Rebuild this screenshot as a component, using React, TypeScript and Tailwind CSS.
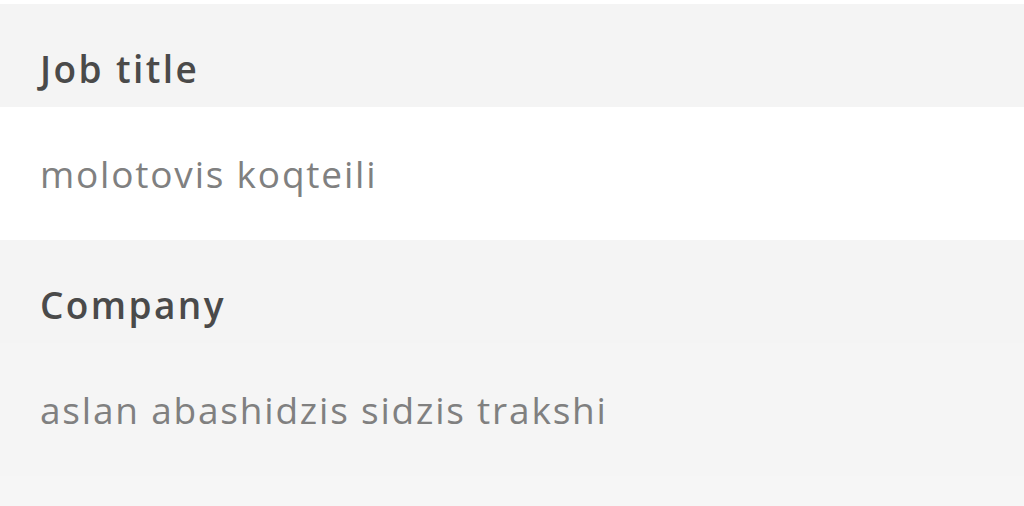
import React from 'react';

const fields = [
  { label: 'Job title', value: 'molotovis koqteili', valueBg: 'bg-white' },
  { label: 'Company', value: 'aslan abashidzis sidzis trakshi', valueBg: 'bg-[#f5f5f5]' },
];

export default function App() {
  return (
    <div className="min-h-screen bg-white" style={{ fontFamily: '"Open Sans", Lato, sans-serif' }}>
      <div className="h-1 bg-white" />
      {fields.map((f) => (
        <div key={f.label}>
          <div className="flex h-[103px] items-center bg-[#f4f4f4] px-10 pt-[26px]">
            <span className="text-[37px] font-semibold tracking-[2.4px] text-[#4a4a4a]">{f.label}</span>
          </div>
          <div className={`flex h-[133px] items-center ${f.valueBg} px-10`}>
            <span className="text-[37px] tracking-[1.8px] text-[#808080]">{f.value}</span>
          </div>
        </div>
      ))}
      <div className="h-[31px] bg-[#f6f6f6]" />
    </div>
  );
}
